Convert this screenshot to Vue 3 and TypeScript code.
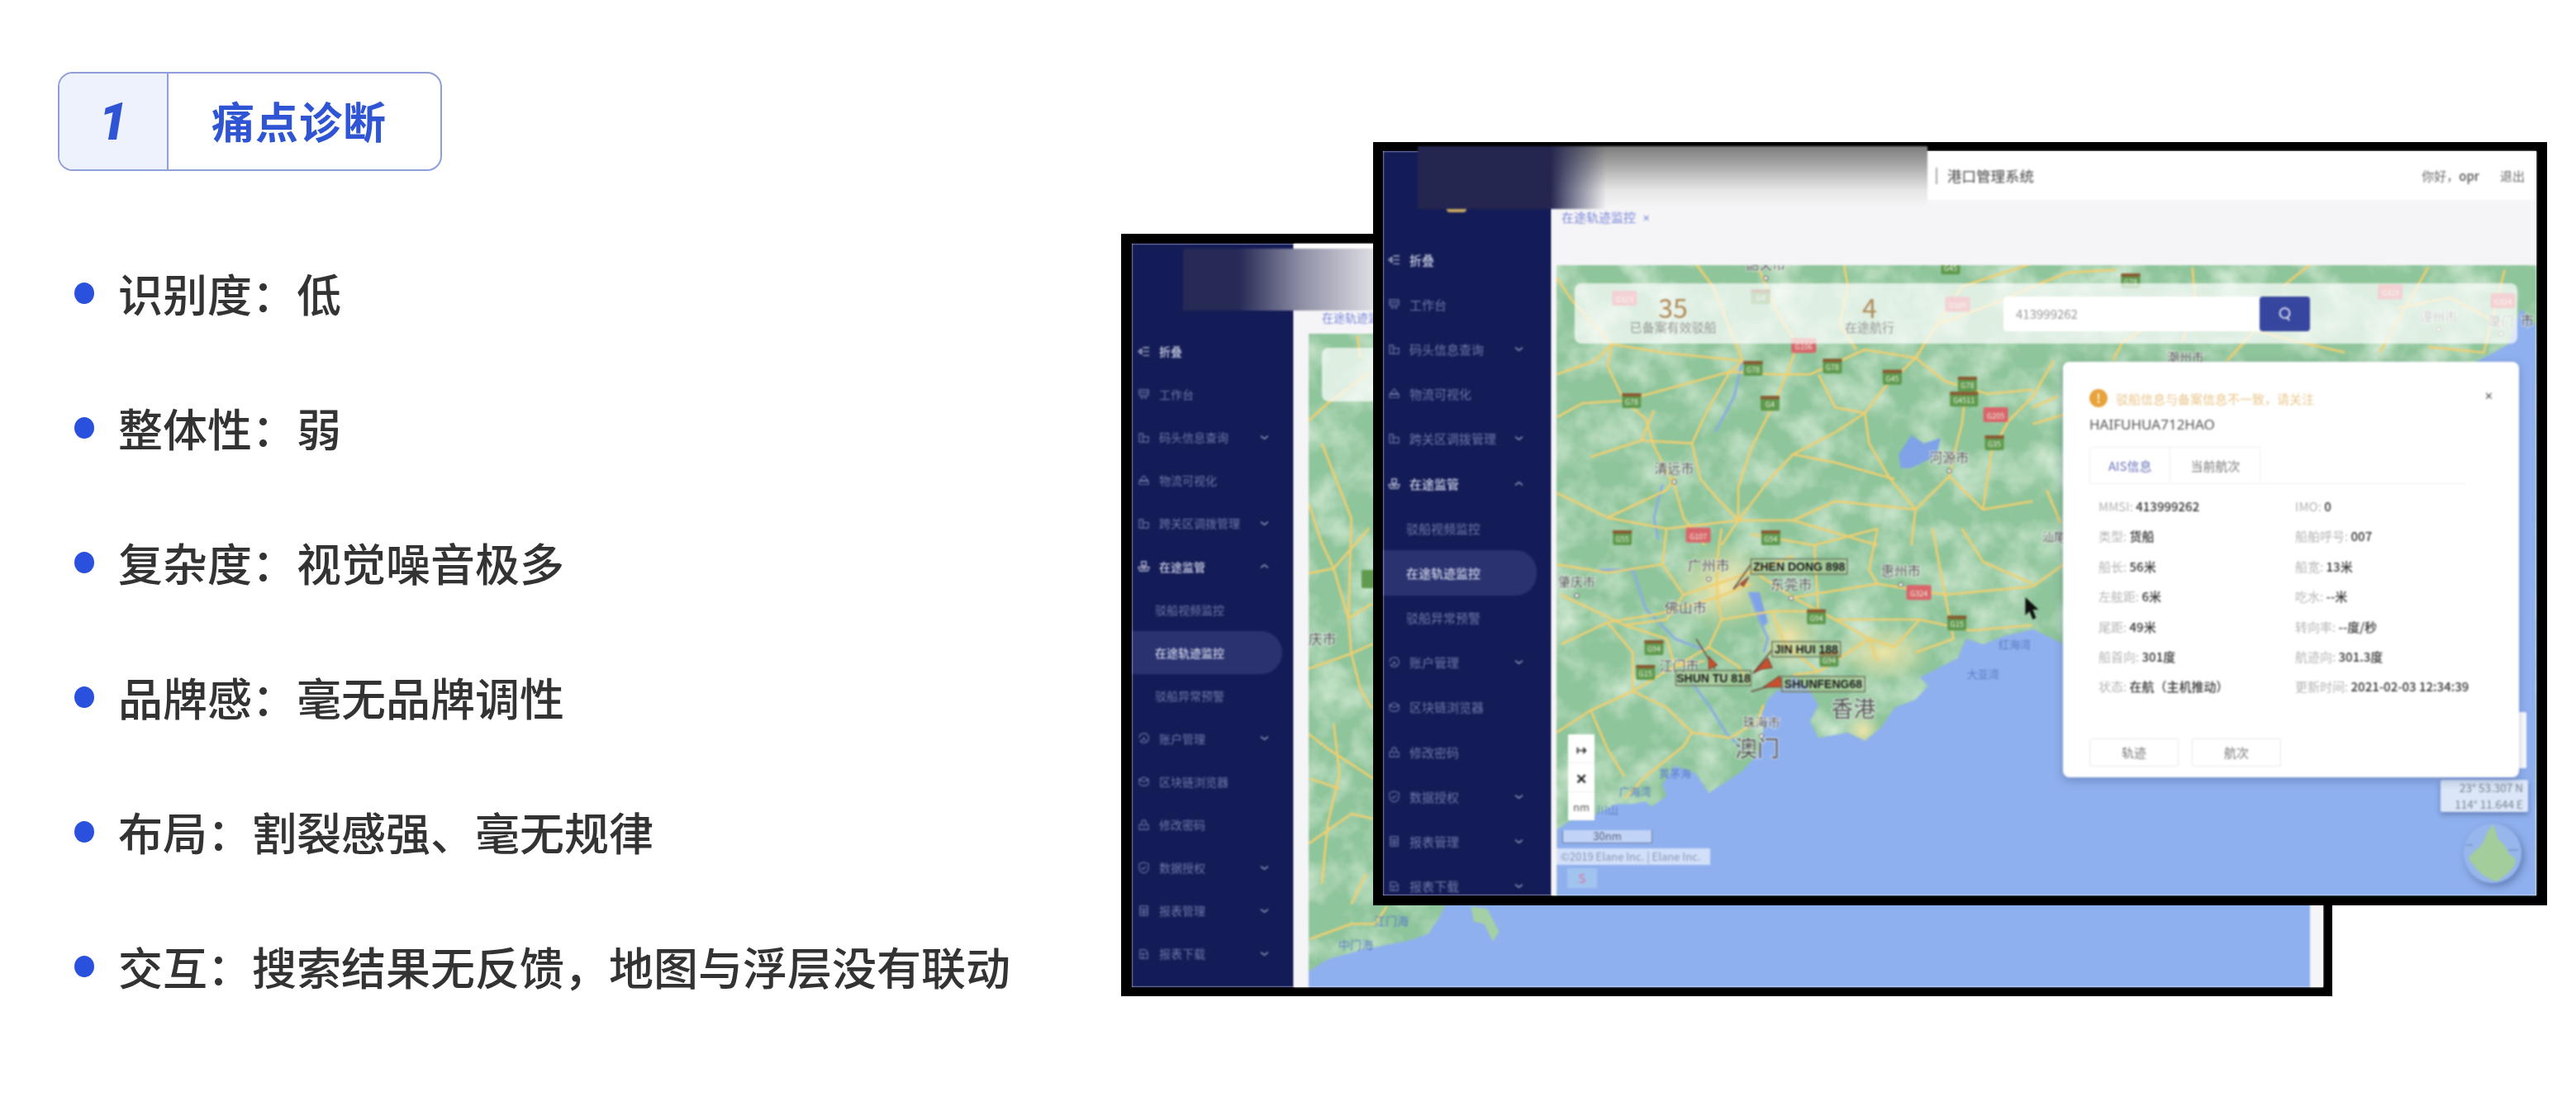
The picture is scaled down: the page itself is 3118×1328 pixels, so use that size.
<script setup lang="ts">
// 左侧诊断列表
const points = [
  '识别度：低',
  '整体性：弱',
  '复杂度：视觉噪音极多',
  '品牌感：毫无品牌调性',
  '布局：割裂感强、毫无规律',
  '交互：搜索结果无反馈，地图与浮层没有联动',
]

interface MenuItem {
  label: string
  icon?: string
  arrow?: 'down' | 'up'
  sub?: boolean
  on?: boolean
  pill?: boolean
}

const icons: Record<string, string> = {
  fold: 'M1 8l4-3v6z M7 3h8 M7 8h8 M7 13h8',
  desk: 'M2 2h12v7H2z M2 5.5h12 M5 9v5 M11 9v5 M5 12h6',
  dock: 'M2 14V3h5v11 M7 7h7v7H2 M4 6h1 M4 9h1',
  truck: 'M8 2l5 6H3z M2 9h12v4H2z',
  watch: 'M5 2h6v5H5z M1 9h14l-2 5H3z M5 11h6',
  user: 'M8 2a6 6 0 1 1-5 9 M8 2a6 6 0 0 0-6 6 M5 12l3-4 3 4 M8 6v1',
  chain: 'M2 6l6-3 6 3v5a6 3 0 0 1-12 0z M2 6l6 3 6-3',
  lock: 'M2 8h12v6H2z M5 8V5a3 3 0 0 1 6 0v3 M7 11h2',
  shield: 'M8 1l6 2v5c0 4-3 6-6 7-3-1-6-3-6-7V3z M5 8l2 2 4-4',
  table: 'M3 2h10v12H3z M3 6h10 M3 10h10 M8 6v8',
  down: 'M3 3h7l3 3v8H3z M3 8h10 M7 8v6',
}

const menu: MenuItem[] = [
  { label: '折叠', icon: 'fold', on: true },
  { label: '工作台', icon: 'desk' },
  { label: '码头信息查询', icon: 'dock', arrow: 'down' },
  { label: '物流可视化', icon: 'truck' },
  { label: '跨关区调拨管理', icon: 'dock', arrow: 'down' },
  { label: '在途监管', icon: 'watch', arrow: 'up', on: true },
  { label: '驳船视频监控', sub: true },
  { label: '在途轨迹监控', sub: true, on: true, pill: true },
  { label: '驳船异常预警', sub: true },
  { label: '账户管理', icon: 'user', arrow: 'down' },
  { label: '区块链浏览器', icon: 'chain' },
  { label: '修改密码', icon: 'lock' },
  { label: '数据授权', icon: 'shield', arrow: 'down' },
  { label: '报表管理', icon: 'table', arrow: 'down' },
  { label: '报表下载', icon: 'down', arrow: 'down' },
]

const shipInfo = [
  ['MMSI', '413999262', 'IMO', '0'],
  ['类型', '货船', '船舶呼号', '007'],
  ['船长', '56米', '船宽', '13米'],
  ['左舷距', '6米', '吃水', '--米'],
  ['尾距', '49米', '转向率', '--度/秒'],
  ['船首向', '301度', '航迹向', '301.3度'],
  ['状态', '在航（主机推动）', '更新时间', '2021-02-03 12:34:39'],
]

// 地图坐标：按截图分块取点，再换算成页面坐标
type Frame = [number, number, number, number]
const north: Frame = [1660, 160, 1.96, 3]
const south: Frame = [1660, 640, 1.96, 3]
const east: Frame = [2460, 160, 2.383, 3]
const rear: Frame = [1350, 270, 2.8, 1.65]

const toPage = (f: Frame, x: number, y: number): [number, number] => [f[0] + x / f[2], f[1] + y / f[3]]
const line = (f: Frame, nums: number[]) => {
  const out: string[] = []
  for (let i = 0; i < nums.length; i += 2) {
    const p = toPage(f, nums[i], nums[i + 1])
    out.push(p[0].toFixed(1) + ',' + p[1].toFixed(1))
  }
  return out.join(' ')
}

const seaFront = line(south, [
  440, 1092, 470, 1062, 530, 1040, 580, 1000, 620, 1000, 650, 990, 665, 1010, 700, 970, 690, 930, 720, 860,
  770, 890, 800, 960, 840, 920, 880, 880, 915, 820, 930, 760, 925, 680, 940, 620, 960, 590, 985, 570, 1000, 530,
  1030, 570, 1060, 640, 1040, 700, 1060, 760, 1130, 740, 1170, 770, 1210, 720, 1240, 650, 1290, 620, 1320, 570,
  1300, 540, 1390, 470, 1410, 400, 1450, 420, 1500, 390, 1568, 365, 1650, 425, 1700, 350, 2000, -300, 2600, -590,
  2695, -669, 2725, -800, 2760, -740, 2760, 1332, 440, 1332,
])

const seaBack = line(rear, [
  655, 1495, 720, 1470, 850, 1450, 1000, 1432, 1060, 1420, 1100, 1385, 1130, 1345, 1600, 1300, 4100, 1300, 4100, 1530,
  655, 1530,
])

const isleBack = line(rear, [1205, 1365, 1260, 1370, 1300, 1415, 1280, 1435, 1250, 1400, 1215, 1395])

const roadsFront = [
  ...[
    [440, 1035, 500, 985, 600, 975, 720, 925, 850, 870, 960, 880, 1040, 880, 1170, 790, 1290, 820, 1360, 905, 1460, 950, 1568, 935],
    [570, 770, 560, 850, 600, 975, 650, 1040, 670, 1140, 720, 1290, 740, 1400, 790, 1500],
    [880, 830, 850, 870, 800, 1000, 760, 1130, 780, 1260, 820, 1330, 870, 1410],
    [1010, 770, 990, 860, 950, 1000, 900, 1150, 870, 1290, 870, 1410, 830, 1500],
    [1290, 820, 1215, 930, 1170, 1020, 1100, 1090, 1000, 1170, 950, 1250, 870, 1410],
    [1170, 1020, 1180, 1130, 1230, 1260, 1290, 1370, 1280, 1500],
    [440, 1310, 560, 1400, 700, 1300, 720, 1250],
    [1410, 930, 1400, 1060, 1380, 1180, 1370, 1250, 1290, 1370, 1100, 1340, 1000, 1410, 870, 1410],
    [1370, 1250, 1450, 1370, 1568, 1340],
    [1120, 480, 1130, 560, 1110, 700, 1150, 790],
    [440, 530, 480, 620, 570, 770],
    [770, 480, 810, 560, 880, 830],
    [920, 500, 960, 650, 1010, 770],
    [1568, 960, 1510, 1050, 1470, 1160, 1450, 1370],
    [1560, 480, 1400, 560, 1290, 820],
    [870, 1410, 700, 1440, 560, 1400],
    [1000, 1410, 1200, 1500],
    [640, 1120, 760, 1130],
    [1700, 1000, 1568, 1060],
    [440, 880, 530, 830, 570, 770, 690, 800, 880, 830],
    [1060, 880, 1100, 1000, 1170, 1020],
    [520, 1180, 640, 1120, 670, 1010],
    [1240, 1260, 1100, 1200, 1000, 1170],
    [1290, 820, 1340, 700, 1480, 620, 1568, 560],
  ].map((r) => line(north, r)),
  ...[
    [450, 420, 560, 340, 680, 310, 820, 250, 900, 200],
    [830, 0, 820, 110, 820, 250, 830, 330, 800, 430, 870, 500, 900, 560],
    [700, 0, 690, 130, 740, 240, 700, 330, 600, 350, 450, 240],
    [440, 740, 520, 660, 620, 590, 720, 500, 790, 480],
    [620, 590, 700, 650, 760, 740, 740, 790, 650, 900, 600, 980],
    [720, 500, 700, 400, 600, 350],
    [760, 740, 850, 760, 915, 700, 930, 640],
    [920, 170, 1000, 250, 1100, 330, 1180, 400, 1200, 480],
    [1000, 250, 1200, 200, 1360, 240, 1568, 210],
    [1100, 330, 1300, 330, 1420, 370, 1568, 350],
    [1180, 400, 1060, 520, 1000, 530],
    [1360, 240, 1380, 400, 1290, 450],
    [1050, 60, 1060, 300],
    [1200, 0, 1180, 150, 1200, 200],
    [1330, 0, 1360, 240],
    [1568, 200, 1450, 120, 1400, 0],
    [830, 330, 950, 300, 1060, 300],
    [800, 430, 720, 500],
    [440, 130, 560, 160, 690, 130],
    [900, 20, 1050, 60, 1200, 0],
    [1650, 120, 1568, 210],
    [560, 340, 620, 450, 620, 590],
    [740, 240, 860, 180, 1000, 100],
    [950, 300, 980, 420, 1060, 520],
    [1300, 330, 1240, 430, 1180, 400],
    [520, 660, 560, 800, 600, 900],
  ].map((r) => line(south, r)),
  ...[
    [0, 560, 100, 510, 240, 500],
    [230, 830, 260, 760, 340, 700, 460, 720],
    [460, 490, 470, 640, 430, 760],
    [720, 560, 800, 480],
    [560, 830, 640, 720, 760, 760, 900, 800],
    [1000, 800, 1140, 490],
    [1140, 780, 1300, 800, 1360, 500],
    [60, 830, 0, 960],
    [1050, 640, 1200, 600, 1350, 700],
    [0, 1000, 70, 960],
    [40, 1300, 80, 1420],
  ].map((r) => line(east, r)),
]

const roadsBack = [
  [655, 395, 720, 360, 860, 300],
  [655, 700, 740, 690, 860, 610],
  [740, 690, 790, 790, 870, 760],
  [655, 890, 800, 860, 875, 840],
  [655, 1020, 720, 1050, 875, 1110],
  [655, 1240, 800, 1180, 875, 1190],
  [820, 225, 830, 270],
  [700, 440, 800, 590, 790, 790, 800, 860, 830, 930, 870, 970],
  [660, 1430, 800, 1400, 880, 1400, 920, 1365],
  [740, 1000, 760, 1100, 720, 1200, 700, 1320],
  [655, 560, 700, 640, 740, 690],
  [660, 1110, 760, 1130],
  [850, 1300, 800, 1360],
].map((r) => line(rear, r))

const riversFront = [
  line(north, [880, 830, 860, 960, 815, 1090]),
  line(north, [690, 1280, 670, 1400, 680, 1480]),
  line(south, [895, 230, 920, 330, 940, 400, 930, 450]),
  line(south, [760, 560, 800, 640, 840, 740, 880, 800]),
  line(south, [540, 150, 620, 150, 650, 290, 720, 400, 790, 440]),
]

const lakes = [
  line(north, [1250, 1170, 1280, 1100, 1310, 1130, 1350, 1110, 1340, 1170, 1320, 1190, 1280, 1220, 1255, 1220]),
  line(south, [895, 230, 920, 230, 940, 340, 925, 360]),
]

interface Tag { x: number; y: number; t: string; w?: number; red?: boolean }
const mk = (f: Frame, list: [number, number, string, boolean?, number?][]): Tag[] =>
  list.map(([x, y, t, red, w]) => {
    const p = toPage(f, x, y)
    return { x: p[0], y: p[1], t, red, w: w ?? (red ? 30 : 23) }
  })

const shields = [
  ...mk(north, [
    [905, 858, 'G78'], [1093, 850, 'G78'], [1235, 890, 'G45'], [1413, 915, 'G78'], [1405, 970, 'G4511', false, 34],
    [617, 975, 'G78'], [945, 985, 'G4'], [1477, 1128, 'G35'], [595, 1473, 'G55'], [947, 1473, 'G94'],
    [775, 1463, 'G107', true], [1480, 1026, 'G205', true], [1025, 775, 'G106', true], [600, 603, 'G323', true],
    [923, 598, 'G4'], [1390, 625, 'G105', true], [1373, 490, 'G45'],
  ]),
  ...mk(south, [
    [1388, 343, 'G15'], [670, 432, 'G94'], [650, 522, 'G15'], [1055, 320, 'G94'], [1085, 475, 'G94'],
    [1298, 232, 'G324', true],
  ]),
  ...mk(east, [
    [282, 540, 'G78'], [1030, 580, 'G319', true], [1355, 612, 'G324', true],
  ]),
]

interface Place { x: number; y: number; t: string; size: number; dot?: boolean; sea?: boolean }
const pl = (f: Frame, x: number, y: number, t: string, size = 16, dot = false, sea = false): Place => {
  const p = toPage(f, x, y)
  return { x: p[0], y: p[1], t, size, dot, sea }
}
const places = [
  pl(north, 935, 482, '韶关市', 16, true),
  pl(north, 718, 1222, '清远市', 16, true),
  pl(north, 1370, 1182, '河源市', 16, true),
  pl(south, 800, 135, '广州市', 17, true),
  pl(south, 995, 205, '东莞市', 17, true),
  pl(south, 1255, 155, '惠州市', 16, true),
  pl(south, 487, 195, '肇庆市', 15, true),
  pl(south, 745, 288, '佛山市', 17),
  pl(south, 730, 500, '江门市', 16),
  pl(south, 1143, 655, '香港', 27),
  pl(south, 925, 705, '珠海市', 15, true),
  pl(south, 915, 800, '澳门', 27),
  pl(south, 1525, 420, '红海湾', 13, false, true),
  pl(south, 1450, 530, '大亚湾', 13, false, true),
  pl(south, 720, 890, '黄茅海', 13, false, true),
  pl(south, 625, 955, '广海湾', 13, false, true),
  pl(south, 560, 1020, '川山', 13, false, true),
  pl(east, 440, 818, '潮州市', 15),
  pl(east, 1170, 670, '漳州市', 15, true),
  pl(east, 1350, 685, '厦门', 15, true),
  pl(east, 1425, 685, '市', 16),
  pl(east, 60, 1470, '汕尾', 14),
]

const placesBack = [
  { x: 1350 + 702 / 2.8, y: 270 + 842 / 1.65, t: '庆市', size: 17, sea: false },
  { x: 1350 + 935 / 2.8, y: 270 + 1403 / 1.65, t: '江门海', size: 14, sea: true },
  { x: 1350 + 815 / 2.8, y: 270 + 1450 / 1.65, t: '中门海', size: 14, sea: true },
]

const ships = [
  { box: [900, 110, 228, 55], text: 'ZHEN DONG 898', stick: [900, 130, 858, 220], hull: [895, 175, 858, 220, 875, 200, 882, 210] },
  { box: [950, 410, 162, 55], text: 'JIN HUI 188', stick: [950, 440, 905, 525], hull: [940, 470, 905, 525, 925, 510, 950, 505] },
  { box: [722, 515, 178, 55], text: 'SHUN TU 818', stick: [770, 400, 815, 510], hull: [800, 465, 820, 495, 800, 510] },
  { box: [973, 537, 197, 55], text: 'SHUNFENG68', stick: [970, 560, 900, 592], hull: [968, 535, 975, 575, 930, 575] },
].map((s) => {
  const a = toPage(south, s.box[0], s.box[1])
  return {
    x: a[0], y: a[1], w: s.box[2] / 1.96, h: s.box[3] / 3, text: s.text,
    stick: line(south, s.stick), hull: line(south, s.hull),
  }
})
</script>

<template>
  <div class="page">
    <section class="brief">
      <header class="badge">
        <span class="badge-no">1</span>
        <h1 class="badge-title">痛点诊断</h1>
      </header>
      <ul class="points">
        <li v-for="p in points" :key="p" class="point">
          <i class="dot"></i>
          <span>{{ p }}</span>
        </li>
      </ul>
    </section>

    <div v-for="w in ['back', 'front']" :key="w" class="shot" :class="w">
      <aside class="side">
        <div
          v-for="m in menu"
          :key="m.label"
          class="item"
          :class="{ sub: m.sub, on: m.on, pill: m.pill }"
        >
          <svg v-if="m.icon" class="ico" viewBox="0 0 16 16">
            <path :d="icons[m.icon]" />
          </svg>
          <span class="label">{{ m.label }}</span>
          <svg v-if="m.arrow" class="arrow" viewBox="0 0 12 8">
            <path :d="m.arrow === 'up' ? 'M1 6l5-4 5 4' : 'M1 2l5 4 5-4'" />
          </svg>
        </div>
      </aside>

      <div class="main">
        <div class="topbar">
          <template v-if="w === 'front'">
            <span class="sys">港口管理系统</span>
            <span class="hello">你好，<b>opr</b></span>
            <span class="quit">退出</span>
          </template>
        </div>
        <div class="tabbar">
          <span class="tab-name">在途轨迹监控</span>
          <span v-if="w === 'front'" class="tab-x">✕</span>
        </div>

        <div class="map">
          <!-- 后面那张截图的地图 -->
          <svg v-if="w === 'back'" class="map-svg" viewBox="1584 404 1212 791" preserveAspectRatio="none">
            <rect x="1584" y="404" width="1212" height="791" fill="#8fc59b" />
            <rect x="1584" y="404" width="1212" height="791" filter="url(#patchy)" />
            <polygon :points="seaBack" fill="#8fb0ee" />
            <polygon :points="isleBack" fill="#a5d0a5" />
            <polyline v-for="(r, i) in roadsBack" :key="i" :points="r" class="road" />
            <rect x="1648" y="690" width="16" height="22" rx="2" fill="#5f9a4e" />
            <text
              v-for="p in placesBack"
              :key="p.t"
              :x="p.x"
              :y="p.y"
              class="place"
              :class="{ sea: p.sea }"
              :font-size="p.size"
            >{{ p.t }}</text>
          </svg>

          <!-- 前面那张截图的地图 -->
          <svg v-else class="map-svg" viewBox="1884 321 1185 763" preserveAspectRatio="none">
            <defs>
              <filter id="patchy" x="0" y="0" width="100%" height="100%">
                <feTurbulence type="fractalNoise" baseFrequency="0.022" numOctaves="4" seed="7" />
                <feColorMatrix values="0 0 0 0 0.70  0 0 0 0 0.85  0 0 0 0 0.70  1.8 0 0 0 -0.72" />
              </filter>
              <radialGradient id="city">
                <stop offset="0" stop-color="#f4e6a8" stop-opacity=".95" />
                <stop offset="1" stop-color="#e8e2a8" stop-opacity="0" />
              </radialGradient>
            </defs>
            <rect x="1884" y="321" width="1185" height="763" fill="#8fc59b" />
            <rect x="1884" y="321" width="1185" height="763" filter="url(#patchy)" />
            <ellipse cx="2085" cy="710" rx="60" ry="55" fill="url(#city)" />
            <ellipse cx="2165" cy="770" rx="40" ry="40" fill="url(#city)" />
            <ellipse cx="2280" cy="790" rx="60" ry="36" fill="url(#city)" />
            <ellipse cx="2255" cy="885" rx="22" ry="22" fill="url(#city)" />
            <ellipse cx="2175" cy="915" rx="20" ry="28" fill="url(#city)" />
            <polygon :points="seaFront" fill="#8fb0ee" />
            <polygon v-for="(l, i) in lakes" :key="'l' + i" :points="l" fill="#7fa3e6" />
            <polyline v-for="(r, i) in riversFront" :key="'w' + i" :points="r" class="river" />
            <polyline v-for="(r, i) in roadsFront" :key="'r' + i" :points="r" class="road" />

            <g v-for="s in shields" :key="s.t + s.x">
              <rect
                :x="s.x - (s.w ?? 23) / 2"
                :y="s.y - 9"
                :width="s.w"
                height="18"
                rx="2"
                :fill="s.red ? '#d9656a' : '#5f9a4e'"
              />
              <rect v-if="!s.red" :x="s.x - (s.w ?? 23) / 2" :y="s.y - 9" :width="s.w" height="4" fill="#8a5a32" />
              <text :x="s.x" :y="s.y + 5" class="shield-text">{{ s.t }}</text>
            </g>

            <g v-for="p in places" :key="p.t">
              <text :x="p.x" :y="p.y + p.size * 0.36" class="place" :class="{ sea: p.sea }" :font-size="p.size">{{ p.t }}</text>
              <circle v-if="p.dot" :cx="p.x" :cy="p.y + 16" r="2.5" class="place-dot" />
            </g>

            <g v-for="s in ships" :key="s.text">
              <polyline :points="s.stick" class="ship-stick" />
              <polygon :points="s.hull" class="ship-hull" />
              <rect :x="s.x" :y="s.y" :width="s.w" :height="s.h" class="ship-box" />
              <text :x="s.x + s.w / 2" :y="s.y + s.h / 2 + 5" class="ship-text">{{ s.text }}</text>
            </g>

            <polygon points="2451,723 2451,745 2456,740 2460,750 2464,748 2460,738 2467,738" fill="#111" />
          </svg>

          <div class="stats">
            <template v-if="w === 'front'">
              <div class="stat"><strong>35</strong><span>已备案有效驳船</span></div>
              <div class="stat"><strong>4</strong><span>在途航行</span></div>
              <div class="search">
                <span class="search-text">413999262</span>
                <button class="search-btn">
                  <svg viewBox="0 0 20 20" width="20" height="20">
                    <circle cx="9.5" cy="9" r="6" />
                    <path d="M12 14l3 4" />
                  </svg>
                </button>
              </div>
            </template>
          </div>

          <template v-if="w === 'front'">
            <div class="tools">
              <span>↦</span>
              <span class="tool-x">✕</span>
              <span class="tool-nm">nm</span>
            </div>
            <div class="scale">30nm</div>
            <div class="copy">©2019 Elane Inc. | Elane Inc.</div>
            <div class="sbox">S</div>

            <div class="under"></div>
            <div class="coord">
              <span>23° 53.307 N</span>
              <span>114° 11.644 E</span>
            </div>
            <div class="globe">
              <svg viewBox="0 0 70 72" width="70" height="72">
                <ellipse cx="35" cy="36" rx="35" ry="36" fill="#97b6ec" />
                <path d="M6 42C10 34 20 30 24 22 27 14 30 6 36 2 39 8 40 14 42 20 50 24 52 32 56 38 62 40 64 44 62 50 56 60 46 66 40 70 28 68 14 56 6 42z" fill="#a4cd9c" />
                <path d="M3 26h8M54 32h12" stroke="#5e7fb5" stroke-width="1" />
              </svg>
            </div>

            <div class="ship-card">
              <span class="card-x">✕</span>
              <div class="warn">
                <i class="warn-ico">!</i>
                <span>驳船信息与备案信息不一致，请关注</span>
              </div>
              <div class="ship-name">HAIFUHUA712HAO</div>
              <div class="card-tabs">
                <span class="card-tab cur">AIS信息</span>
                <span class="card-tab">当前航次</span>
              </div>
              <div class="rows">
                <template v-for="r in shipInfo" :key="r[0]">
                  <div class="row"><em>{{ r[0] }}: </em>{{ r[1] }}</div>
                  <div class="row"><em>{{ r[2] }}: </em>{{ r[3] }}</div>
                </template>
              </div>
              <div class="card-btns">
                <span class="card-btn">轨迹</span>
                <span class="card-btn">航次</span>
              </div>
            </div>
          </template>
        </div>
      </div>

      <!-- 截图里打码的部分 -->
      <div class="mosaic">
        <i v-if="w === 'front'" class="smile"></i>
      </div>
    </div>
  </div>
</template>

<style scoped>
.page {
  position: relative;
  width: 3118px;
  height: 1328px;
  overflow: hidden;
  background: #fff;
  font-family: "Noto Sans CJK SC", "Noto Sans", sans-serif;
}

.brief {
  padding: 87px 0 0 70px;
}

.badge {
  display: flex;
  width: 465px;
  height: 120px;
  box-sizing: border-box;
  border: 2px solid #8f9fdc;
  border-radius: 18px;
  overflow: hidden;
  color: #2f55d4;
}

.badge-no {
  display: flex;
  align-items: center;
  justify-content: center;
  width: 130px;
  background: #eef2fc;
  border-right: 2px solid #8f9fdc;
  font: italic 900 62px Roboto, "Liberation Sans", sans-serif;
}

.badge-title {
  margin: 0;
  padding-left: 52px;
  font-size: 52px;
  font-weight: 700;
  line-height: 114px;
  letter-spacing: 1px;
}

.points {
  list-style: none;
  margin: 66px 0 0;
  padding: 0 0 0 20px;
}

.point {
  display: flex;
  align-items: center;
  height: 163px;
  font-size: 54px;
  font-weight: 500;
  color: #333;
}

.dot {
  width: 24px;
  height: 26px;
  margin-right: 29px;
  border-radius: 50%;
  background: #2a50de;
}

/* 两张截图 */
.shot {
  position: absolute;
  display: flex;
  box-sizing: border-box;
  border-style: solid;
  border-color: #000;
  background: #f5f5f7;
}

.shot > * {
  filter: blur(0.8px);
}

.back {
  left: 1357px;
  top: 283px;
  width: 1466px;
  height: 923px;
  border-width: 12px 11px 11px 13px;
}

.front {
  left: 1662px;
  top: 172px;
  width: 1421px;
  height: 924px;
  border-width: 11px 13px 12px 12px;
}

.side {
  flex: none;
  box-sizing: border-box;
  padding-top: 104px;
  background: #141c57;
  overflow: hidden;
}

.back .side {
  width: 196px;
}

.front .side {
  width: 204px;
}

.item {
  display: flex;
  align-items: center;
  color: #6f78a8;
  white-space: nowrap;
}

.back .item {
  height: 52.1px;
  padding-left: 7px;
  font-size: 14px;
}

.front .item {
  height: 54.2px;
  padding-left: 6px;
  font-size: 15px;
}

.item.on {
  color: #cfd3e6;
  font-weight: 500;
}

.back .item.sub,
.front .item.sub {
  padding-left: 28px;
}

.item.pill {
  background: #2a3370;
  border-radius: 0 26px 26px 0;
  box-sizing: border-box;
}

.back .item.pill {
  width: 182px;
}

.front .item.pill {
  width: 186px;
}

.ico {
  flex: none;
  width: 15px;
  height: 15px;
  margin-right: 11px;
  fill: none;
  stroke: currentColor;
  stroke-width: 1.2;
}

.arrow {
  flex: none;
  position: absolute;
  width: 11px;
  height: 7px;
  fill: none;
  stroke: #aab0cc;
  stroke-width: 1.5;
}

.back .arrow {
  left: 155px;
}

.front .arrow {
  left: 159px;
}

.main {
  flex: 1;
  display: flex;
  flex-direction: column;
  min-width: 0;
  background: #f5f5f7;
}

.topbar {
  display: flex;
  align-items: center;
  flex: none;
  background: #fff;
  color: #666;
}

.back .topbar {
  height: 81px;
}

.front .topbar {
  height: 59px;
  padding-left: 465px;
  font-size: 15px;
}

.sys {
  margin-right: auto;
  padding-left: 12px;
  border-left: 2px solid #aaa;
  font-size: 17.5px;
  line-height: 20px;
  color: #444;
}

.hello b {
  font-weight: 500;
  color: #555;
}

.quit {
  margin: 0 14px 0 25px;
}

.tabbar {
  display: flex;
  flex: none;
  color: #7b86d8;
}

.back .tabbar {
  height: 28px;
  padding-left: 34px;
  font-size: 14px;
  line-height: 16px;
}

.front .tabbar {
  height: 79px;
  padding: 13px 0 0 12px;
  box-sizing: border-box;
  font-size: 15px;
  line-height: 16px;
}

.tab-x {
  margin-left: 8px;
  font-size: 11px;
}

.map {
  position: relative;
  flex: 1;
  overflow: hidden;
}

.back .map {
  margin: 0 16px 0 18px;
}

.front .map {
  margin-left: 6px;
}

.map-svg {
  position: absolute;
  inset: 0;
  width: 100%;
  height: 100%;
  display: block;
}

.road {
  fill: none;
  stroke: #f3cf6e;
  stroke-width: 2.6;
  stroke-linejoin: round;
}

.river {
  fill: none;
  stroke: #88aee0;
  stroke-width: 3;
}

.shield-text {
  font-size: 9px;
  fill: #e8f0e0;
  text-anchor: middle;
}

.place {
  fill: #555;
  text-anchor: middle;
  stroke: rgba(255, 255, 255, 0.65);
  stroke-width: 2px;
  paint-order: stroke;
}

.place.sea {
  fill: #5a7fc8;
  stroke: none;
}

.place-dot {
  fill: #fff;
  stroke: #666;
  stroke-width: 1;
}

.ship-stick {
  fill: none;
  stroke: #6b4a3a;
  stroke-width: 1.5;
}

.ship-hull {
  fill: #c9502f;
  stroke: #7a3a2a;
  stroke-width: 1;
}

.ship-box {
  fill: rgba(190, 205, 140, 0.35);
  stroke: #6e7a60;
  stroke-width: 1.5;
}

.ship-text {
  font-size: 14px;
  font-weight: 700;
  fill: #1a1a1a;
  text-anchor: middle;
  font-family: "Liberation Sans", sans-serif;
}

.stats {
  position: absolute;
  display: flex;
  align-items: center;
  border-radius: 8px;
  background: rgba(255, 255, 255, 0.7);
}

.back .stats {
  left: 16px;
  top: 17px;
  width: 1000px;
  height: 65px;
}

.front .stats {
  left: 22px;
  top: 22px;
  width: 1141px;
  height: 73px;
}

.stat {
  display: flex;
  flex-direction: column;
  align-items: center;
  width: 238px;
  font-size: 15px;
  line-height: 18px;
  color: #999;
}

.stat strong {
  font-size: 32px;
  font-weight: 400;
  line-height: 32px;
  color: #b08a5a;
}

.search {
  display: flex;
  width: 371px;
  height: 42px;
  margin-left: 43px;
  background: #fff;
  border-radius: 4px;
  font-size: 15px;
  color: #999;
}

.search-text {
  flex: 1;
  padding-left: 15px;
  line-height: 42px;
}

.search-btn {
  width: 61px;
  border: 0;
  border-radius: 4px;
  padding: 0;
  background: #36459e;
}

.search-btn svg {
  display: block;
  margin: 0 auto;
  fill: none;
  stroke: #fff;
  stroke-width: 1.6;
}

.tools {
  position: absolute;
  left: 14px;
  top: 568px;
  display: flex;
  flex-direction: column;
  width: 32px;
  height: 104px;
  background: #fff;
  font-size: 15px;
  font-weight: 700;
  color: #333;
}

.tools span {
  flex: 1;
  display: flex;
  align-items: center;
  justify-content: center;
  border-bottom: 1px solid #eee;
}

.tools .tool-x {
  font-size: 17px;
  color: #222;
}

.tools .tool-nm {
  border: 0;
  font-size: 13px;
  font-weight: 400;
  color: #555;
}

.scale {
  position: absolute;
  left: 7px;
  top: 684px;
  width: 109px;
  height: 16px;
  box-sizing: border-box;
  border: 1.5px solid #6a7aa0;
  border-top: 0;
  background: rgba(255, 255, 255, 0.45);
  font-size: 13px;
  line-height: 14px;
  text-align: center;
  color: #54617f;
}

.copy {
  position: absolute;
  left: 0;
  top: 706px;
  width: 186px;
  height: 20px;
  padding-left: 5px;
  box-sizing: border-box;
  background: rgba(255, 255, 255, 0.6);
  font-size: 13px;
  line-height: 20px;
  color: #8a97b8;
  white-space: nowrap;
}

.sbox {
  position: absolute;
  left: 13px;
  top: 730px;
  width: 36px;
  height: 24px;
  background: rgba(180, 215, 240, 0.5);
  font-size: 14px;
  line-height: 24px;
  text-align: center;
  color: #dc6f9b;
}

.under {
  position: absolute;
  left: 1150px;
  top: 541px;
  width: 24px;
  height: 68px;
  background: #fff;
  border-radius: 2px;
}

.coord {
  position: absolute;
  left: 1070px;
  top: 623px;
  display: flex;
  flex-direction: column;
  align-items: flex-end;
  box-sizing: border-box;
  width: 106px;
  height: 39px;
  padding-right: 6px;
  background: #dbe6f8;
  border-radius: 2px;
  box-shadow: 0 3px 6px rgba(40, 60, 110, 0.45);
  font-size: 13.5px;
  line-height: 19.5px;
  color: #7d8593;
  white-space: nowrap;
}

.globe {
  position: absolute;
  left: 1098px;
  top: 676px;
  width: 70px;
  height: 72px;
  border-radius: 50%;
  box-shadow: 3px 4px 10px rgba(40, 60, 110, 0.45);
}

.ship-card {
  position: absolute;
  left: 613px;
  top: 117px;
  width: 552px;
  height: 503px;
  box-sizing: border-box;
  padding: 33px 32px 0;
  background: #fff;
  border-radius: 8px;
  box-shadow: 0 4px 12px rgba(30, 50, 100, 0.3);
  color: #444;
}

.card-x {
  position: absolute;
  right: 31px;
  top: 33px;
  font-size: 13px;
  line-height: 16px;
  color: #555;
}

.warn {
  display: flex;
  align-items: center;
  height: 22px;
  font-size: 15px;
  color: #eac68a;
}

.warn-ico {
  width: 22px;
  height: 22px;
  margin-right: 10px;
  border-radius: 50%;
  background: #e8a33c;
  font-style: normal;
  font-weight: 700;
  font-size: 15px;
  line-height: 22px;
  text-align: center;
  color: #fff3d8;
}

.ship-name {
  margin-top: 9px;
  font-family: "Noto Sans", sans-serif;
  font-size: 17px;
  line-height: 24px;
  color: #555;
}

.card-tabs {
  display: flex;
  height: 44px;
  margin: 15px 33px 0 0;
  border-bottom: 1px solid #eee;
  font-size: 15px;
  color: #777;
}

.card-tab {
  padding: 0 24px;
  border: 1px solid #eee;
  border-bottom: 0;
  line-height: 44px;
  margin-right: -1px;
}

.card-tab.cur {
  padding: 0 22px;
  color: #6a74b8;
  background: #fff;
}

.rows {
  display: grid;
  grid-template-columns: 238px 1fr;
  grid-auto-rows: 36.4px;
  margin: 9px 0 0 11px;
  font-size: 15px;
  font-weight: 500;
  color: #333;
}

.row {
  line-height: 36px;
  white-space: nowrap;
}

.row em {
  font-style: normal;
  font-weight: 400;
  color: #b4b4b4;
}

.card-btns {
  display: flex;
  gap: 16px;
  margin-top: 44px;
}

.card-btn {
  width: 108px;
  height: 34px;
  box-sizing: border-box;
  border: 1px solid #e6e6e6;
  border-radius: 3px;
  font-size: 15px;
  line-height: 32px;
  text-align: center;
  color: #777;
}

/* 打码 */
.mosaic {
  position: absolute;
}

.back .mosaic {
  left: 62px;
  top: 6px;
  width: 240px;
  height: 75px;
  background: linear-gradient(90deg, #262a55 0, #262a55 28%, #8f90a6 60%, #e6e6ea 100%);
}

.front .mosaic {
  left: 42px;
  top: -6px;
  width: 617px;
  height: 76px;
  background:
    linear-gradient(90deg, #24264f 0, #24264f 26%, rgba(36, 38, 79, 0.7) 29%, rgba(36, 38, 79, 0) 37%),
    linear-gradient(180deg, #7c7c7c 0, #a8a8a8 30%, #e6e6e6 70%, #f6f6f8 100%);
}

.smile {
  position: absolute;
  left: 35px;
  bottom: -4px;
  width: 24px;
  height: 4px;
  border-radius: 0 0 14px 14px;
  background: #c8a860;
}
</style>
